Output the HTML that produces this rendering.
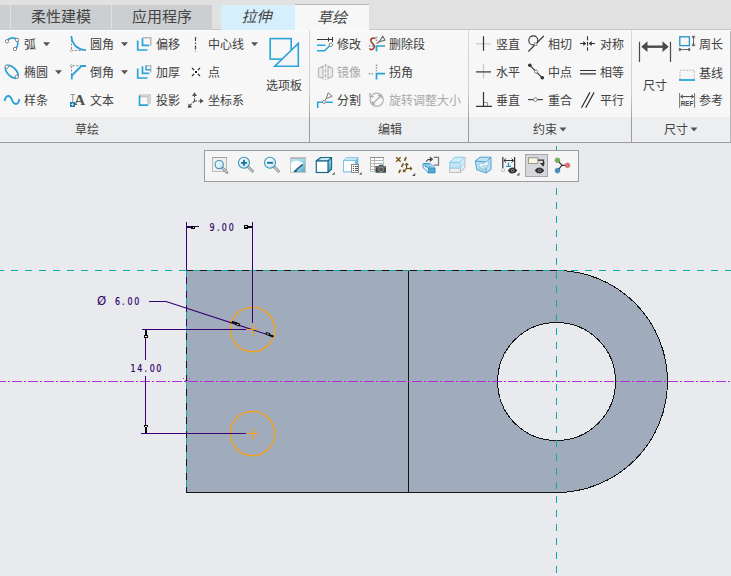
<!DOCTYPE html>
<html lang="zh-CN">
<head>
<meta charset="utf-8">
<title>草绘</title>
<style>
html,body{margin:0;padding:0;}
body{width:731px;height:576px;overflow:hidden;position:relative;background:#e8eaee;font-family:"Liberation Sans","Noto Sans CJK SC",sans-serif;}
#top{position:absolute;left:0;top:0;width:731px;height:29px;background:#e1e1e1;border-bottom:1px solid #c3c6c9;}
.tab{position:absolute;top:5px;height:25px;background:#cccfd2;color:#444;font-size:15px;line-height:24px;text-align:center;}
#ribbon{position:absolute;left:0;top:30px;width:731px;height:87px;background:#f7f7f7;border-top:1px solid #fcfcfc;box-sizing:border-box;}
#glabel{position:absolute;left:0;top:117px;width:731px;height:25px;background:#edeef0;border-bottom:1px solid #9c9c9c;}
.t{position:absolute;font-size:12px;line-height:14px;color:#404040;white-space:nowrap;}
.t.d{color:#a9a9a9;}
.g{position:absolute;font-size:12px;line-height:14px;color:#444;white-space:nowrap;top:123px;}
.sep{position:absolute;top:30px;width:1px;height:112px;background:linear-gradient(#d8d8d8,#cfcfcf 55%,#9c9c9c 80%,#9c9c9c);}
#mini{position:absolute;left:204px;top:150px;width:374px;height:30px;background:#f4f5f6;border:1px solid #9a9da1;}
svg{position:absolute;left:0;top:0;}
</style>
</head>
<body>
<div id="top"></div>
<div class="tab" style="left:0;width:10px;"></div>
<div class="tab" style="left:11px;width:100px;">柔性建模</div>
<div class="tab" style="left:112px;width:100px;">应用程序</div>
<div class="tab" style="left:221px;width:71px;padding-right:3px;background:#d5f0fc;font-style:italic;">拉伸</div>
<div class="tab" style="left:295px;width:74px;top:4px;height:25px;background:#f7f7f7;font-style:italic;line-height:25px;border-top:1px solid #b8b8b8;">草绘</div>
<div id="ribbon"></div>
<div id="glabel"></div>
<div class="sep" style="left:309px"></div>
<div class="sep" style="left:468px"></div>
<div class="sep" style="left:631px"></div>
<div style="position:absolute;left:730px;top:31px;width:1px;height:111px;background:#b4b6b8"></div>

<span class="t" style="left:24px;top:38px">弧</span>
<span class="t" style="left:24px;top:66px">椭圆</span>
<span class="t" style="left:24px;top:94px">样条</span>
<span class="t" style="left:90px;top:38px">圆角</span>
<span class="t" style="left:90px;top:66px">倒角</span>
<span class="t" style="left:90px;top:94px">文本</span>
<span class="t" style="left:156px;top:38px">偏移</span>
<span class="t" style="left:156px;top:66px">加厚</span>
<span class="t" style="left:156px;top:94px">投影</span>
<span class="t" style="left:208px;top:38px">中心线</span>
<span class="t" style="left:208px;top:66px">点</span>
<span class="t" style="left:208px;top:94px">坐标系</span>
<span class="t" style="left:266px;top:79px">选项板</span>
<span class="t" style="left:337px;top:38px">修改</span>
<span class="t d" style="left:337px;top:66px">镜像</span>
<span class="t" style="left:337px;top:94px">分割</span>
<span class="t" style="left:389px;top:38px">删除段</span>
<span class="t" style="left:389px;top:66px">拐角</span>
<span class="t d" style="left:389px;top:94px">旋转调整大小</span>
<span class="t" style="left:496px;top:38px">竖直</span>
<span class="t" style="left:496px;top:66px">水平</span>
<span class="t" style="left:496px;top:94px">垂直</span>
<span class="t" style="left:548px;top:38px">相切</span>
<span class="t" style="left:548px;top:66px">中点</span>
<span class="t" style="left:548px;top:94px">重合</span>
<span class="t" style="left:600px;top:38px">对称</span>
<span class="t" style="left:600px;top:66px">相等</span>
<span class="t" style="left:600px;top:94px">平行</span>
<span class="t" style="left:643px;top:79px">尺寸</span>
<span class="t" style="left:699px;top:38px">周长</span>
<span class="t" style="left:699px;top:67px">基线</span>
<span class="t" style="left:699px;top:94px">参考</span>

<span class="g" style="left:75px">草绘</span>
<span class="g" style="left:378px">编辑</span>
<span class="g" style="left:533px">约束</span>
<span class="g" style="left:664px">尺寸</span>


<svg width="731" height="576" viewBox="0 0 731 576">

<!-- RIBBON ICONS -->
<g id="ricons" fill="none" stroke-linecap="butt">
  <!-- dropdown arrows -->
  <g fill="#555" stroke="none">
    <path d="M43 42.3h7l-3.5 4z"/>
    <path d="M55 70.3h7l-3.5 4z"/>
    <path d="M121 42.3h7l-3.5 4z"/>
    <path d="M121 70.3h7l-3.5 4z"/>
    <path d="M251 42.3h7l-3.5 4z"/>
    <path d="M559.5 127.5h7l-3.5 4z"/>
    <path d="M690.500 127.5h7l-3.5 4z"/>
  </g>
  <!-- arc -->
  <path d="M7 41.2A6.2 6.2 0 0 1 17 39.8A7.5 7.5 0 0 1 15 49" stroke="#2ba3d8" stroke-width="1.8"/>
  <g fill="#fff" stroke="#777" stroke-width="0.9"><circle cx="7" cy="41.3" r="1.7"/><circle cx="17.1" cy="39.9" r="1.7"/><circle cx="15" cy="49" r="1.7"/></g>
  <!-- ellipse -->
  <ellipse cx="11.8" cy="71.8" rx="8" ry="4.3" transform="rotate(45 11.8 71.8)" stroke="#2ba3d8" stroke-width="1.8"/>
  <g fill="#fff" stroke="#777" stroke-width="0.9"><circle cx="6.7" cy="66.7" r="1.7"/><circle cx="16.8" cy="76.8" r="1.7"/></g>
  <!-- spline -->
  <path d="M4.5 101C6 94.500 10 94.500 12 100S18 105.500 19.500 99" stroke="#2ba3d8" stroke-width="1.8"/>
  <!-- fillet -->
  <path d="M71.500 40V50.500H81" stroke="#888" stroke-width="1" stroke-dasharray="2 1.500"/>
  <path d="M71.500 49.100l1.400 1.400l-1.400 1.400l-1.400-1.400z" fill="#f7f7f7" stroke="#888" stroke-width="0.700"/>
  <path d="M71.300 36C72 44.500 78 50.100 86 50.100" stroke="#2ba3d8" stroke-width="1.800"/>
  <!-- chamfer -->
  <path d="M71.500 75V65.700H81" stroke="#888" stroke-width="1" stroke-dasharray="2 1.500"/>
  <path d="M71.500 64.300l1.400 1.400l-1.400 1.400l-1.400-1.400z" fill="#f7f7f7" stroke="#888" stroke-width="0.700"/>
  <path d="M71.800 79.500V75.500L81.500 66H86" stroke="#2ba3d8" stroke-width="1.800"/>
  <!-- text icon -->
  <path d="M70.500 94.500h4.500M72.700 94.500V102" stroke="#999" stroke-width="1"/>
  <rect x="70" y="102" width="5" height="5" fill="#1b7fb0" stroke="none"/>
  <path d="M71 104.500h3M72.500 103v3" stroke="#cfe8f5" stroke-width="0.8"/>
  <!-- offset -->
  <path d="M142.500 37.800H150.700V45.800" stroke="#b8b8b8" stroke-width="1.600"/>
  <path d="M137.700 40.500V50H147.500" stroke="#2ba3d8" stroke-width="1.700"/>
  <path d="M142.500 38.200V45.300H149.200" stroke="#2ba3d8" stroke-width="1.700"/>
  <!-- thicken -->
  <path d="M145.500 65.700H150.700V72.500" stroke="#b8b8b8" stroke-width="1.500"/>
  <path d="M137.700 68.500V78H147.500" stroke="#2ba3d8" stroke-width="1.700"/>
  <path d="M142.500 66.200V73.300H149.200" stroke="#2ba3d8" stroke-width="1.700"/>
  <path d="M146 65.500V69.800H150.500" stroke="#2ba3d8" stroke-width="1.500"/>
  <!-- project -->
  <path d="M139 95H150V104M139.500 96.700H148V104" stroke="#b4b4b4" stroke-width="1.100"/>
  <path d="M139.500 95.500V105.200H148.300" stroke="#2ba3d8" stroke-width="1.700"/>
  <!-- centerline -->
  <path d="M195.500 37V51.500" stroke="#444" stroke-width="1.2" stroke-dasharray="4 1.5 1.500 1.500"/>
  <!-- point -->
  <path d="M192 68l2.100 2.100M200 68l-2.100 2.100M192 76l2.100-2.100M200 76l-2.100-2.100" stroke="#333" stroke-width="1.300"/>
  <rect x="195" y="71" width="2" height="2" fill="#222" stroke="none"/>
  <!-- csys -->
  <path d="M194.500 101V95.500M194.500 101H200.500M194.500 101L190 105.500" stroke="#555" stroke-width="1.100" stroke-dasharray="2.500 1.300"/>
  <path d="M192 96l2.500-3.800 2.500 3.800zM200 98.500l3.800 2.500-3.800 2.500zM187.800 108l0.800-4.500 3.700 3.700z" fill="#555" stroke="none"/>
  <!-- palette -->
  <rect x="270.200" y="38.600" width="21" height="20.500" stroke="#2ba3d8" stroke-width="1.600"/>
  <path d="M298.300 43.500V66.300H274.800Z" fill="#f5f5f5" stroke="#2ba3d8" stroke-width="1.600" stroke-linejoin="miter"/>
  <!-- modify -->
  <path d="M317 39.500H332M328.500 37.500V41.500M332.500 37V42" stroke="#333" stroke-width="1"/>
  <path d="M317 45.300H325.500M317 50.800H324.500L330 45.500" stroke="#2ba3d8" stroke-width="1.600"/>
  <circle cx="330.800" cy="44.800" r="1.700" fill="#fff" stroke="#777" stroke-width="0.900"/>
  <!-- mirror (disabled) -->
  <path d="M318.500 68.500L323 66V78.500L318.500 76.500ZM328 66L332.500 68.500V76.500L328 78.500Z" fill="#ececec" stroke="#bdbdbd" stroke-width="1.300"/>
  <path d="M325.500 64V80" stroke="#b0b0b0" stroke-width="1.200" stroke-dasharray="3.500 1.500"/>
  <!-- divide -->
  <path d="M317.700 108V102.200H322.300M325.800 102.200H332.800" stroke="#2ba3d8" stroke-width="1.600"/>
  <path d="M328.200 92.800L332.200 96.300L326.200 98.600ZM326.200 98.600L324.600 100.800" stroke="#777" stroke-width="1"/>
  <circle cx="323.900" cy="102" r="1.500" fill="#fff" stroke="#777" stroke-width="0.900"/>
  <!-- delete segment -->
  <path d="M368.800 46H374.500M376.500 36.800V43.500" stroke="#9a9a9a" stroke-width="1.600" stroke-dasharray="1.400 1.400"/>
  <path d="M375.500 38.400C372.500 37.300 370 38.800 371 41.300S375.300 44.800 374.300 47.300S371 50.500 369.400 48.600" stroke="#a03a2a" stroke-width="1.600"/>
  <path d="M376.500 51.500V46H385" stroke="#2ba3d8" stroke-width="1.700"/>
  <path d="M382.800 36.300L385 40.200L379 41.800ZM379 41.800L377.300 43.500" stroke="#666" stroke-width="1.100" fill="#f7f7f7"/>
  <!-- corner -->
  <path d="M368.800 73.700H374.500M376.500 64.500V71.200" stroke="#9a9a9a" stroke-width="1.600" stroke-dasharray="1.400 1.400"/>
  <path d="M376.500 79.500V73.700H385" stroke="#2ba3d8" stroke-width="1.700"/>
  <!-- rotate resize (disabled) -->
  <circle cx="376.700" cy="99.800" r="6.600" stroke="#b4b4b4" stroke-width="1.200"/>
  <path d="M372.500 104L381 95.500M372.300 101.300V104.200H375.200M378.100 95.300H381.200V98.400" stroke="#adadad" stroke-width="1.200"/>
  <path d="M370 93V96.600H373.600" stroke="#adadad" stroke-width="1.300"/>
  <!-- vertical -->
  <path d="M476 43.800H491" stroke="#c8c8c8" stroke-width="1.200"/>
  <path d="M483.500 36.200V50.800" stroke="#333" stroke-width="1.200"/>
  <!-- horizontal -->
  <path d="M483.500 64V78.500" stroke="#c8c8c8" stroke-width="1.200"/>
  <path d="M476 71.900H491" stroke="#333" stroke-width="1.200"/>
  <!-- perpendicular -->
  <path d="M484 102.500H487.500V106" stroke="#999" stroke-width="1"/>
  <path d="M483.500 92V106.300M476 106.300H492" stroke="#333" stroke-width="1.200"/>
  <!-- tangent -->
  <circle cx="533.300" cy="40.400" r="4.500" stroke="#333" stroke-width="1.100"/>
  <path d="M528.300 51.500L543.800 36" stroke="#333" stroke-width="1.100"/>
  <rect x="534.300" y="42.900" width="2.600" height="2.600" fill="#fff" stroke="#777" stroke-width="0.800"/>
  <!-- midpoint -->
  <path d="M529.800 65.300L542.300 77.800" stroke="#333" stroke-width="1.200"/>
  <circle cx="529.800" cy="65.300" r="1.800" fill="#333" stroke="none"/><circle cx="542.300" cy="77.800" r="1.800" fill="#333" stroke="none"/>
  <circle cx="536" cy="71.600" r="1.600" fill="#fff" stroke="#777" stroke-width="0.900"/>
  <!-- coincident -->
  <path d="M528 99.600H543" stroke="#333" stroke-width="1.100"/>
  <circle cx="535.400" cy="99.600" r="1.900" fill="#fff" stroke="#777" stroke-width="0.900"/>
  <!-- symmetric -->
  <path d="M587.500 36.200V50.800" stroke="#333" stroke-width="1.100" stroke-dasharray="4 1.500"/>
  <path d="M580 43.500H585M595 43.500H590" stroke="#333" stroke-width="1.100"/>
  <path d="M583.300 41L586.300 43.500L583.300 46ZM591.700 41L588.700 43.500L591.700 46Z" fill="#333" stroke="none"/>
  <!-- equal -->
  <path d="M580 70.500H596M580 73.800H596" stroke="#333" stroke-width="1.200"/>
  <!-- parallel -->
  <path d="M581.500 107.700L589.900 92.400M585.700 107.700L594.100 92.400" stroke="#333" stroke-width="1.200"/>
  <!-- dimension big -->
  <path d="M639.500 41.700V62M670.500 41.700V62" stroke="#4a4a4a" stroke-width="1.200"/>
  <path d="M646 46.700H664" stroke="#4a4a4a" stroke-width="2.400"/>
  <path d="M641.300 46.700L647.500 41.300V52.100ZM668.700 46.700L662.500 41.300V52.100Z" fill="#4a4a4a" stroke="none"/>
  <!-- perimeter -->
  <rect x="679.800" y="36.800" width="9.600" height="8.800" stroke="#2a92c4" stroke-width="1.300"/>
  <path d="M693.500 36.500V45.500M691.800 36.300H695.200M691.800 45.700H695.200M692.200 38.300L693.500 36.800L694.800 38.300M692.200 43.800L693.500 45.300L694.800 43.800" stroke="#555" stroke-width="0.900"/>
  <path d="M679.500 49.500H689.500M679.300 47.800V51.200M689.700 47.800V51.200M681 48.300L679.700 49.500L681 50.700M688 48.300L689.300 49.500L688 50.700" stroke="#555" stroke-width="0.900"/>
  <!-- baseline -->
  <path d="M680 79V70.300H694.300V79" stroke="#aaa" stroke-width="1" stroke-dasharray="1.500 1.500"/>
  <path d="M679 80H695" stroke="#2ba3d8" stroke-width="1.800"/>
  <!-- reference -->
  <path d="M679.600 93V107.800M694.600 93V107.800" stroke="#777" stroke-width="1"/>
  <path d="M681 96.600H693.300M683 94.800L680.700 96.600L683 98.400M691.300 94.800L693.600 96.600L691.300 98.400" stroke="#444" stroke-width="1"/>
</g>
<text x="74" y="105" font-family="'Liberation Serif',serif" font-weight="bold" font-size="15.500" fill="#505050">A</text>
<text x="680.800" y="106.200" font-family="'Liberation Sans',sans-serif" font-weight="bold" font-size="6.800" fill="#444" textLength="12.600" lengthAdjust="spacingAndGlyphs">REF</text>

<!-- DRAWING -->
<g id="drawing" shape-rendering="crispEdges">
  <path d="M186.500 270.500H556.500A111 111 0 0 1 556.500 492.500H186.500Z M615.500 381.500A59 59 0 1 0 497.500 381.500A59 59 0 1 0 615.500 381.500Z" fill="#a0acbc" fill-rule="evenodd" stroke="#141414" stroke-width="1"/>
  <line x1="408.500" y1="270" x2="408.500" y2="492" stroke="#141414" stroke-width="1"/>
  <!-- dimension extension on left edge -->
  <line x1="186.500" y1="222" x2="186.500" y2="329" stroke="#380070" stroke-width="1"/>
  <!-- teal dashed refs -->
  <g stroke="#10aaa6" stroke-width="1" fill="none">
    <line x1="0" y1="270.500" x2="731" y2="270.500" stroke-dasharray="7 7" stroke-dashoffset="3"/>
    <line x1="556.500" y1="143" x2="556.500" y2="576" stroke-dasharray="7 7" stroke-dashoffset="11"/>
    <line x1="186.500" y1="270" x2="186.500" y2="492" stroke-dasharray="7 7"/>
  </g>
  <!-- purple centerline -->
  <line x1="0" y1="381.500" x2="731" y2="381.500" stroke="#b030d8" stroke-width="1" stroke-dasharray="10 2 2 2" stroke-dashoffset="4"/>
  <path d="M183.500 378.500L189.500 384.500M189.500 378.500L183.500 384.500" stroke="#b030d8" stroke-width="1" stroke-dasharray="1 1" fill="none"/>
  <rect x="186" y="381" width="1" height="1" fill="#4a80e0"/>
  <!-- sketch circles -->
  <g shape-rendering="auto" stroke="#fca311" fill="none">
    <circle cx="252.500" cy="329.500" r="22.200" stroke-width="1.250"/>
    <circle cx="252.500" cy="433.500" r="22.200" stroke-width="1.250"/>
  </g>
    <!-- dimensions -->
  <g stroke="#380070" stroke-width="1" fill="none">
    <path d="M252.500 222V323"/>
    <path d="M186.500 226.500H199M244 226.500H252"/>
    <path d="M142 329.500H246M141 433.500H246"/>
    <path d="M145.500 330V360M145.500 376V433"/>
    <path d="M149 301.500H166"/>
    <path d="M166 301.500L273.500 336.600" shape-rendering="auto" stroke-width="1.100"/>
  </g>
  <g fill="#0a0a0a" stroke="none">
    <rect x="187" y="226" width="5" height="2" fill="#2a0050"/>
    <rect x="191" y="226" width="4" height="3"/><rect x="193" y="227" width="1" height="1" fill="#e8e8e8"/>
    <rect x="244" y="225" width="4" height="4"/><rect x="245" y="226" width="2" height="1" fill="#e8e8e8"/>
    <rect x="247" y="226" width="5" height="2"/>
    <rect x="145" y="330" width="2" height="5"/>
    <rect x="144" y="335" width="4" height="3"/><rect x="145" y="336" width="2" height="1" fill="#ffffff"/>
    <rect x="145" y="427" width="2" height="6"/>
    <rect x="144" y="425" width="4" height="2"/><rect x="145" y="426" width="2" height="1" fill="#ffffff"/>
  </g>
  <g shape-rendering="auto" stroke="#0a0a0a" fill="none">
    <path d="M231.800 321.800L237 323.500" stroke-width="2"/>
    <path d="M236.300 322.300L240.300 323.700L239.400 326.400L235.400 325Z" fill="#0a0a0a" stroke="none"/>
    <rect x="237" y="324.200" width="1.600" height="1" fill="#e8e8e8" stroke="none" transform="rotate(18 238 324.5)"/>
    <path d="M273.300 336.500L268.500 334.900" stroke-width="2"/>
    <path d="M266.300 331.900L270.300 333.300L269.400 336L265.400 334.600Z" fill="#0a0a0a" stroke="none"/>
    <rect x="267" y="333.500" width="1.600" height="1" fill="#e8e8e8" stroke="none" transform="rotate(18 268 334)"/>
  </g>
  <path d="M247 329.500H258M252.500 323.500V336M247 433.500H258M252.500 427.500V440" stroke="#ffa000" stroke-width="1" fill="none"/>
  <rect x="252" y="329" width="1" height="1" fill="#30b090"/>
  <g fill="#300068" stroke="#300068" stroke-width="0.200" font-family="'DejaVu Sans Condensed','DejaVu Sans','Liberation Sans',sans-serif" font-size="10" shape-rendering="auto">
    <text transform="translate(0 231) scale(0.88 1.130)" y="0" x="238.1 246.5 252.0 259.9">9.00</text>
    <text transform="translate(0 372) scale(0.88 1.130)" y="0" x="148.3 156.1 164.1 170.2 177.7">14.00</text>
    <text transform="translate(0 305.300)" y="0" x="97" font-size="13" stroke="none">Ø</text>
    <text transform="translate(0 305) scale(0.88 1.130)" y="0" x="130.8 138.6 144.9 152.5">6.00</text>
  </g>
</g>

<!-- MINI TOOLBAR ICONS -->
<defs>
  <linearGradient id="lens" x1="0" y1="0" x2="1" y2="1"><stop offset="0" stop-color="#ffffff"/><stop offset="1" stop-color="#bfe3f2"/></linearGradient>
  <linearGradient id="rp" x1="0" y1="0" x2="1" y2="1"><stop offset="0" stop-color="#b8e6f8"/><stop offset="0.5" stop-color="#a0d8ee"/><stop offset="1" stop-color="#5aa5c2"/></linearGradient>
  <linearGradient id="cubeR" x1="0" y1="0" x2="0" y2="1"><stop offset="0" stop-color="#9ad2e6"/><stop offset="1" stop-color="#4a9fc2"/></linearGradient>
</defs>
<rect x="204.500" y="150.500" width="374" height="31" fill="#f5f5f6" stroke="#9a9c9f" stroke-width="1"/>
<g id="mini-icons" fill="none">
  <!-- 1 refit -->
  <rect x="212.500" y="157.500" width="14" height="14" fill="#f0f0f0" stroke="#b9b9b9" stroke-width="1"/>
  <path d="M212.500 157.500H226.500" stroke="#a0a0a0" stroke-width="1"/>
  <path d="M222.200 167.600L227 172.400" stroke="#8e8e8e" stroke-width="2.800" stroke-linecap="round"/>
  <path d="M222.800 168.200L226.800 172.200" stroke="#dcdcdc" stroke-width="1.100" stroke-linecap="round"/>
  <circle cx="219.200" cy="164.600" r="4.100" fill="url(#lens)" stroke="#3a93b8" stroke-width="1.100"/>
  <!-- 2 zoom in -->
  <path d="M248 166.800L252.500 171.300" stroke="#8e8e8e" stroke-width="2.800" stroke-linecap="round"/>
  <path d="M248.600 167.400L252.300 171.100" stroke="#dcdcdc" stroke-width="1.100" stroke-linecap="round"/>
  <circle cx="244" cy="162.800" r="5.500" fill="url(#lens)" stroke="#3a93b8" stroke-width="1.100"/>
  <path d="M241 162.800H247M244 159.800V165.800" stroke="#1b6f99" stroke-width="1.800"/>
  <!-- 3 zoom out -->
  <path d="M274 166.800L278.500 171.300" stroke="#8e8e8e" stroke-width="2.800" stroke-linecap="round"/>
  <path d="M274.600 167.400L278.300 171.100" stroke="#dcdcdc" stroke-width="1.100" stroke-linecap="round"/>
  <circle cx="270" cy="162.800" r="5.500" fill="url(#lens)" stroke="#3a93b8" stroke-width="1.100"/>
  <path d="M267 162.800H273" stroke="#1b6f99" stroke-width="1.800"/>
  <!-- 4 repaint -->
  <rect x="290.500" y="158" width="15" height="14.500" fill="url(#rp)" stroke="#c4c4c4" stroke-width="1"/>
  <path d="M291 172V163.500C293 160.300 299.500 159.500 303.500 164L294.500 172Z" fill="#ffffff" stroke="none"/>
  <path d="M290.500 158H305.500" stroke="#a0a0a0" stroke-width="1"/>
  <path d="M294 171.800L302.700 164.400" stroke="#1a5f85" stroke-width="1.500"/>
  <path d="M293.300 172L296.500 169.500L297 172Z" fill="#1a5f85" stroke="none"/>
  <!-- 5 cube -->
  <path d="M316.300 161L321 157.500H331.600V169L328 172.500" fill="url(#cubeR)" stroke="#1a6888" stroke-width="1.100" stroke-linejoin="round"/>
  <path d="M316.300 161L321 157.500H331.600L328 161Z" fill="#c8ecf8" stroke="#1a6888" stroke-width="1.100" stroke-linejoin="round"/>
  <rect x="316.300" y="161" width="11.700" height="11.500" fill="#ffffff" stroke="#1a6888" stroke-width="1.200"/>
  <path d="M334.700 172V174.700H332Z" fill="#555" stroke="none"/>
  <!-- 6 display style -->
  <path d="M343.500 160.500L346.500 157.500H358V168.800L355.500 171.800H343.500Z" fill="#c4e6f5" stroke="#8fcdea" stroke-width="1"/>
  <path d="M355.500 160.500L358 157.500V168.800L355.500 171.800Z" fill="#6fbbdd" stroke="none"/>
  <rect x="343.500" y="160.500" width="12" height="11.300" fill="#ffffff" stroke="#7cc4e4" stroke-width="1"/>
  <rect x="351.500" y="164.500" width="7" height="8" fill="#f6f6f6" stroke="#8c8c8c" stroke-width="1"/>
  <path d="M353 166.500H354M355 166.500H357.500M353 168.500H354M355 168.500H357.500M353 170.500H354M355 170.500H357.500" stroke="#5a5a5a" stroke-width="1" shape-rendering="crispEdges"/>
  <path d="M361.800 172V174.700H359.100Z" fill="#555" stroke="none"/>
  <!-- 7 table + camera -->
  <rect x="370.500" y="157.500" width="13.500" height="14" fill="#ffffff" stroke="none"/>
  <g shape-rendering="crispEdges" stroke="#b4b4b4" stroke-width="1">
    <path d="M370.500 160.500H384M370.500 163.500H384M370.500 166.500H377M370.500 169.500H376M370.500 157.500V171.500M374.500 157.500V171.500M383.500 157.500V165"/>
    <path d="M370 157.500H384" stroke="#8a8a8a"/>
    <path d="M370 171.500H376" stroke="#9fd0e8"/>
    <path d="M383.500 160V165" stroke="#9fd0e8"/>
  </g>
  <path d="M375.500 166.300H378.300L379.300 164.800H383L384 166.300H386V172.700H375.500Z" fill="#4a4a4a" stroke="none"/>
  <path d="M375.500 166.300H386V167.500H375.500Z" fill="#7a7a7a" stroke="none"/>
  <circle cx="381.100" cy="169.400" r="2.300" fill="#3a3a3a" stroke="#a8a8a8" stroke-width="0.900"/>
  <circle cx="381.100" cy="169.400" r="0.900" fill="#777" stroke="none"/>
  <!-- 8 datum display -->
  <path d="M396.200 157.300L400.600 161.700M400.600 157.300L396.200 161.700" stroke="#7a5a1a" stroke-width="1.500"/>
  <path d="M406.200 157.100L398.900 172.800" stroke="#7a5a1a" stroke-width="1.700" stroke-dasharray="4.100 2.800"/>
  <path d="M406.600 164V168.500H411M406.600 168.500L404 171" stroke="#6e4f14" stroke-width="1.200"/>
  <path d="M404.800 165L406.600 162.800L408.400 165ZM410.300 166.800L412.300 168.500L410.300 170.200ZM403 172L403.400 169.400L405.600 171.600Z" fill="#6e4f14" stroke="#6e4f14" stroke-width="0.500"/>
  <path d="M415.200 172.800V176H412Z" fill="#555" stroke="none"/>
  <!-- 9 -->
  <path d="M433.600 157.400H438.500V165.200H433.600" stroke="#7a7a7a" stroke-width="1.300"/>
  <path d="M426.600 161.800C426.600 159.800 427.500 159.300 431 159.300" stroke="#3a3a3a" stroke-width="1.200"/>
  <path d="M429.800 157.200L432.300 159.300L429.800 161.400" stroke="#3a3a3a" stroke-width="1.200"/>
  <path d="M423 163.500H430L434.800 168V172.700H428.300L423 167.500Z" fill="#eaf6fb" stroke="#3a9ccc" stroke-width="1"/>
  <path d="M425.200 164.800H429.200L431.500 167H428.300L425.200 166.800Z" fill="#bfe2f1" stroke="#3a9ccc" stroke-width="0.800"/>
  <rect x="428.300" y="168" width="6.500" height="4.700" fill="#5aa9cc" stroke="#2a8fc0" stroke-width="0.900"/>
  <path d="M423 163.500L428.300 168" stroke="#3a9ccc" stroke-width="0.900"/>
  <!-- 10 -->
  <path d="M460.400 162.300L464.800 157.200V167.500L460.400 172.400Z" fill="#e6eff3" stroke="#ababab" stroke-width="0.900"/>
  <rect x="449.700" y="168" width="10.700" height="4.400" fill="#eeeeee" stroke="#b8b8b8" stroke-width="0.900"/>
  <rect x="449.700" y="162.300" width="10.700" height="5.700" fill="#bfe5f5" stroke="#8fcde8" stroke-width="0.900"/>
  <path d="M449.700 162.300L454.900 157.200H464.800L460.400 162.300Z" fill="#cdeefa" stroke="#7fc6e4" stroke-width="0.900"/>
  <path d="M460.400 162.300L464.800 157.200V162.500L460.400 168Z" fill="#d5eef8" stroke="#9fd2e8" stroke-width="0.700"/>
  <!-- 11 -->
  <path d="M475.300 161L480.100 157.200H491V169.500L486.100 173L476.800 169.700Z" fill="#bfe3f2" stroke="#4aa0c8" stroke-width="1"/>
  <path d="M475.300 161L486.100 162V173M486.100 162L491 157.200" stroke="#4aa0c8" stroke-width="1"/>
  <path d="M478.500 163L483.500 163.500L488.300 160.300V165.500L484 169.300L479.500 167.800Z" fill="#e4f4fa" stroke="#7fbfdc" stroke-width="0.700"/>
  <path d="M479.500 167.800L484 166L488.300 165.500M484 166V169.300" stroke="#7fbfdc" stroke-width="0.700"/>
  <path d="M477.500 169.500L485.500 171.700M478.500 168.500L485.500 170.500" stroke="#8fc9e2" stroke-width="0.600"/>
  <!-- 12 dim display -->
  <path d="M502.800 157V168M514.600 157V168" stroke="#333" stroke-width="1.200"/>
  <path d="M504 160.500H513.500M506 158.500L503.800 160.500L506 162.500M511.500 158.500L513.700 160.500L511.500 162.500" stroke="#333" stroke-width="1"/>
  <path d="M508.500 162.500V166.300M506 166.300H511" stroke="#2a92c4" stroke-width="1.300"/>
  <circle cx="503.100" cy="170.200" r="1.600" fill="#f4f4f4" stroke="#b0b0b0" stroke-width="0.800"/>
  <path d="M507.800 170.600C510 166.600 515 166.600 517.200 170.600C515 174.600 510 174.600 507.800 170.600Z" fill="#333" stroke="none"/>
  <circle cx="512.500" cy="170.500" r="1.150" fill="#222" stroke="#d0d0d0" stroke-width="0.600"/>
  <path d="M519.500 172.500V175.500H516.500Z" fill="#555" stroke="none"/>
  <!-- 13 selected -->
  <rect x="525.500" y="154.500" width="22" height="22" fill="#d5d7da" stroke="#a6a8ab" stroke-width="1"/>
  <rect x="528.500" y="157.800" width="9.300" height="5.700" fill="#fdf6dc" stroke="#8f8f8f" stroke-width="0.900"/>
  <path d="M538 160.200H543.500V164.500" stroke="#333" stroke-width="1.200"/>
  <path d="M540 163.300L543.300 166.800L544.800 162.500Z" fill="#333" stroke="none"/>
  <path d="M534.800 170.600C537 166.600 542 166.600 544.200 170.600C542 174.600 537 174.600 534.800 170.600Z" fill="#333" stroke="none"/>
  <circle cx="539.500" cy="170.500" r="1.150" fill="#222" stroke="#c8c8c8" stroke-width="0.600"/>
  <!-- 14 -->
  <path d="M557.500 160.300L562 165.300L557.500 170.600M562 165.300H567.500" stroke="#333" stroke-width="1.200"/>
  <circle cx="557.500" cy="160.300" r="2.400" fill="#74b060" stroke="#5a9a48" stroke-width="0.600"/>
  <circle cx="567.500" cy="165.300" r="2.400" fill="#e47272" stroke="#cc5a5a" stroke-width="0.600"/>
  <circle cx="557.500" cy="170.600" r="2.400" fill="#4a8cba" stroke="#35749f" stroke-width="0.600"/>
</g>
</svg>
</body>
</html>
